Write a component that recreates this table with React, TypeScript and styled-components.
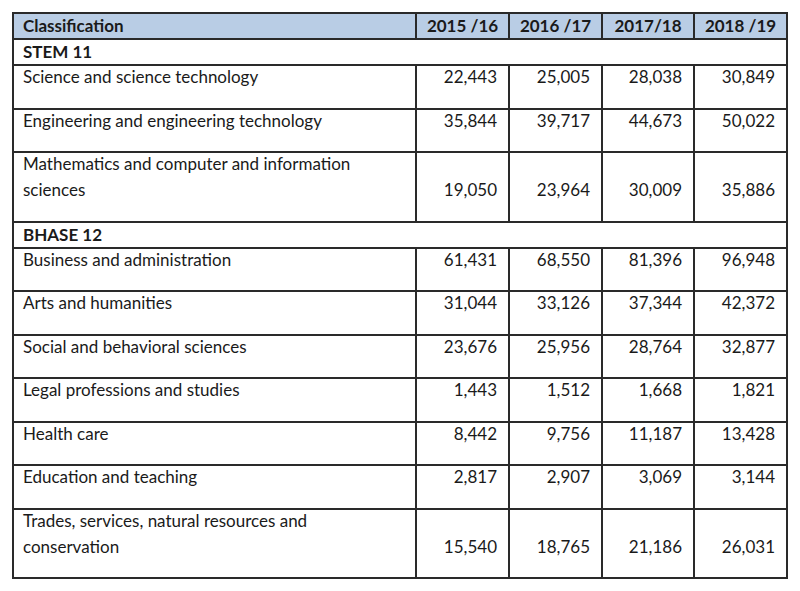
import React from 'react';
import styled, { createGlobalStyle } from 'styled-components';

const GlobalStyle = createGlobalStyle`
  html, body {
    margin: 0;
    padding: 0;
    background: #ffffff;
  }
`;

const Page = styled.div`
  padding: 12px 0 0 12px;
  font-family: Lato, 'Open Sans', sans-serif;
  color: #1a1a1a;
`;

const Table = styled.table`
  border-collapse: collapse;
  table-layout: fixed;
  width: 774px;
  border: 2px solid #2a2a2a;
  font-size: 17px;
`;

const Col = styled.col<{ $w: number }>`
  width: ${({ $w }) => $w}px;
`;

const HeadCell = styled.th<{ $align?: string }>`
  background: #b9cde5;
  border: 2px solid #2a2a2a;
  font-weight: 700;
  line-height: 24px;
  padding: 0 9px;
  text-align: ${({ $align }) => $align || 'center'};
`;

const SectionCell = styled.td`
  border: 2px solid #2a2a2a;
  font-weight: 700;
  line-height: 24px;
  padding: 0 9px;
`;

const LabelCell = styled.td`
  border: 2px solid #2a2a2a;
  line-height: 26px;
  padding: 0 9px 17.5px;
  vertical-align: top;
`;

const NumCell = styled.td`
  border: 2px solid #2a2a2a;
  line-height: 26px;
  padding: 0 11px 17.5px 4px;
  text-align: right;
  vertical-align: bottom;
`;

/* text sits a little high in its line, as in the source document */
const CellText = styled.div`
  margin-top: -2px;
`;

type Row = { label: React.ReactNode; values: string[] };
type Section = { title: string; rows: Row[] };

const years = ['2015 /16', '2016 /17', '2017/18', '2018 /19'];
const widths = [403, 93, 93, 92, 93];

const sections: Section[] = [
  {
    title: 'STEM 11',
    rows: [
      { label: 'Science and science technology', values: ['22,443', '25,005', '28,038', '30,849'] },
      { label: 'Engineering and engineering technology', values: ['35,844', '39,717', '44,673', '50,022'] },
      {
        label: <>Mathematics and computer and information<br />sciences</>,
        values: ['19,050', '23,964', '30,009', '35,886'],
      },
    ],
  },
  {
    title: 'BHASE 12',
    rows: [
      { label: 'Business and administration', values: ['61,431', '68,550', '81,396', '96,948'] },
      { label: 'Arts and humanities', values: ['31,044', '33,126', '37,344', '42,372'] },
      { label: 'Social and behavioral sciences', values: ['23,676', '25,956', '28,764', '32,877'] },
      { label: 'Legal professions and studies', values: ['1,443', '1,512', '1,668', '1,821'] },
      { label: 'Health care', values: ['8,442', '9,756', '11,187', '13,428'] },
      { label: 'Education and teaching', values: ['2,817', '2,907', '3,069', '3,144'] },
      {
        label: <>Trades, services, natural resources and<br />conservation</>,
        values: ['15,540', '18,765', '21,186', '26,031'],
      },
    ],
  },
];

export default function App() {
  return (
    <Page>
      <GlobalStyle />
      <Table>
        <colgroup>
          {widths.map((w, i) => (
            <Col key={i} $w={w} />
          ))}
        </colgroup>
        <thead>
          <tr>
            <HeadCell $align="left">Classification</HeadCell>
            {years.map((y) => (
              <HeadCell key={y}>{y}</HeadCell>
            ))}
          </tr>
        </thead>
        <tbody>
          {sections.map((s) => (
            <React.Fragment key={s.title}>
              <tr>
                <SectionCell colSpan={5}>{s.title}</SectionCell>
              </tr>
              {s.rows.map((r, i) => (
                <tr key={i}>
                  <LabelCell>
                    <CellText>{r.label}</CellText>
                  </LabelCell>
                  {r.values.map((v, j) => (
                    <NumCell key={j}>
                      <CellText>{v}</CellText>
                    </NumCell>
                  ))}
                </tr>
              ))}
            </React.Fragment>
          ))}
        </tbody>
      </Table>
    </Page>
  );
}
